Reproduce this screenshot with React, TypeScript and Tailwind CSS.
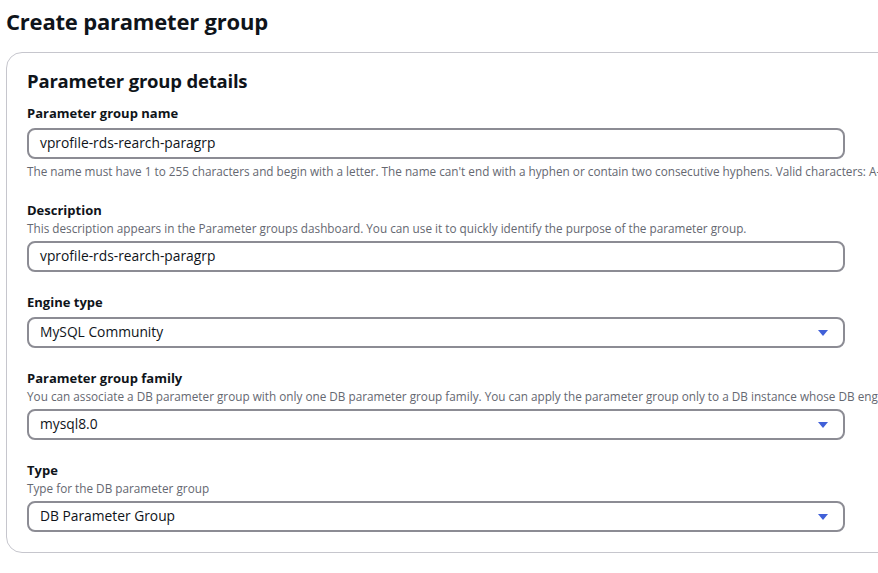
import React from 'react';

const font = { fontFamily: '"Open Sans", "Noto Sans", sans-serif' };

function Caret() {
  return (
    <svg width="12" height="8" viewBox="0 0 12 8" className="shrink-0">
      <path d="M1 1h10L6 7z" fill="#4160d8" />
    </svg>
  );
}

function TextInput({ value }: { value: string }) {
  return (
    <div className="w-[818px] h-[31px] border-2 border-[#8c8c94] rounded-lg flex items-center px-[11px] text-[13.8px] text-[#0f141a]">
      {value}
    </div>
  );
}

function Select({ value }: { value: string }) {
  return (
    <div className="w-[818px] h-[31px] border-2 border-[#8c8c94] rounded-lg flex items-center justify-between pl-[11px] pr-[14px] text-[13.8px] text-[#0f141a]">
      <span>{value}</span>
      <Caret />
    </div>
  );
}

function Field({
  label,
  hint,
  children,
  after,
}: {
  label: string;
  hint?: string;
  children: React.ReactNode;
  after?: string;
}) {
  return (
    <div className="flex flex-col">
      <div className="text-[13px] font-bold text-[#0f141a] leading-[18px]">{label}</div>
      {hint && <div className="text-[11.75px] text-[#656871] leading-[18px] whitespace-nowrap">{hint}</div>}
      <div className={hint ? 'mt-[4px]' : 'mt-[6px]'}>{children}</div>
      {after && <div className="text-[11.75px] text-[#656871] leading-[18px] mt-[3px] whitespace-nowrap">{after}</div>}
    </div>
  );
}

export default function App() {
  return (
    <div className="min-h-screen bg-white overflow-hidden" style={font}>
      <div className="pl-[6px] pt-[4px]">
        <h1 className="text-[22px] font-bold text-[#0f141a] leading-[34px] tracking-[-0.2px]">Create parameter group</h1>

        <div className="mt-[14px] w-[920px] border border-[#c6c6cd] rounded-2xl pl-[20px] pt-[13px] pb-[20px]">
          <h2 className="text-[18.5px] font-bold text-[#0f141a] leading-[30px] tracking-[-0.2px]">Parameter group details</h2>

          <div className="mt-[8px] flex flex-col gap-[21px]">
            <Field
              label="Parameter group name"
              after="The name must have 1 to 255 characters and begin with a letter. The name can't end with a hyphen or contain two consecutive hyphens. Valid characters: A-Z, a-z, 0-9, and hyphen (-)."
            >
              <TextInput value="vprofile-rds-rearch-paragrp" />
            </Field>

            <Field
              label="Description"
              hint="This description appears in the Parameter groups dashboard. You can use it to quickly identify the purpose of the parameter group."
            >
              <TextInput value="vprofile-rds-rearch-paragrp" />
            </Field>

            <Field label="Engine type">
              <Select value="MySQL Community" />
            </Field>

            <Field
              label="Parameter group family"
              hint="You can associate a DB parameter group with only one DB parameter group family. You can apply the parameter group only to a DB instance whose DB engine and version match the parameter group family."
            >
              <Select value="mysql8.0" />
            </Field>

            <Field label="Type" hint="Type for the DB parameter group">
              <Select value="DB Parameter Group" />
            </Field>
          </div>
        </div>
      </div>
    </div>
  );
}
